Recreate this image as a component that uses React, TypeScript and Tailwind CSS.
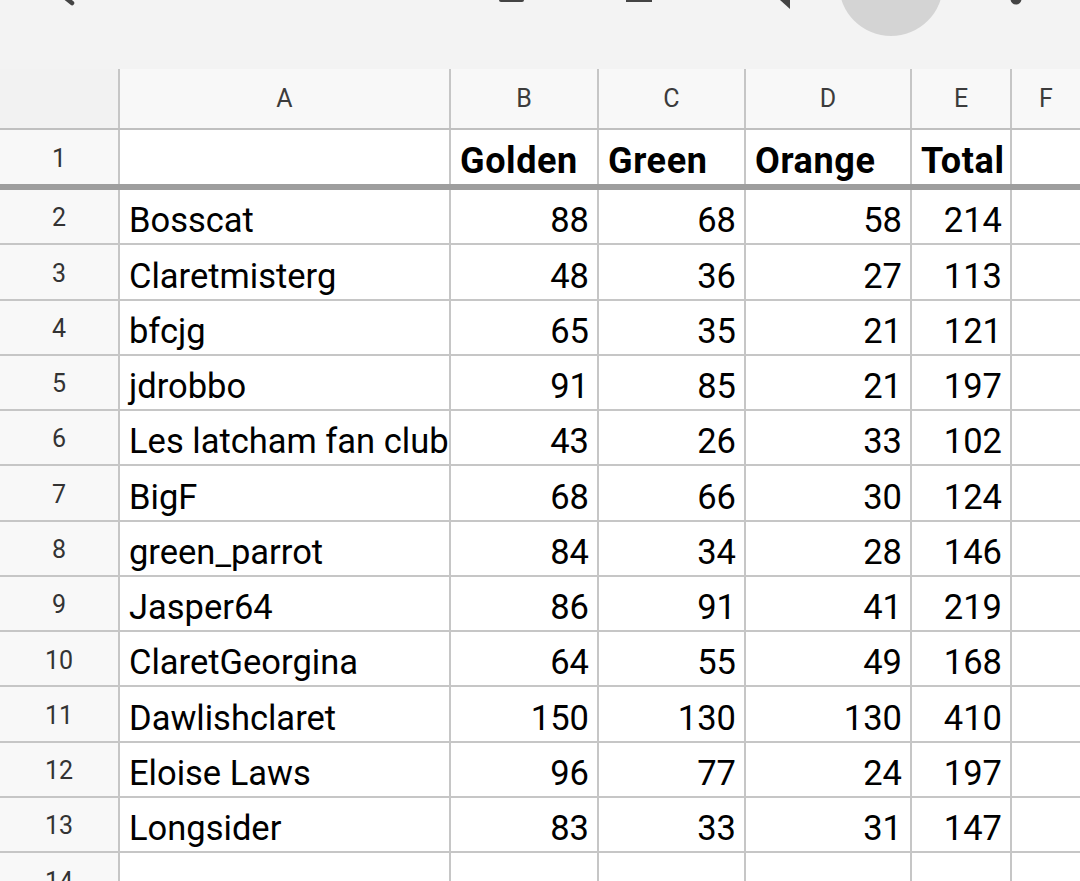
import React from 'react';

const rows: [string, number, number, number, number][] = [
  ['Bosscat', 88, 68, 58, 214],
  ['Claretmisterg', 48, 36, 27, 113],
  ['bfcjg', 65, 35, 21, 121],
  ['jdrobbo', 91, 85, 21, 197],
  ['Les latcham fan club', 43, 26, 33, 102],
  ['BigF', 68, 66, 30, 124],
  ['green_parrot', 84, 34, 28, 146],
  ['Jasper64', 86, 91, 41, 219],
  ['ClaretGeorgina', 64, 55, 49, 168],
  ['Dawlishclaret', 150, 130, 130, 410],
  ['Eloise Laws', 96, 77, 24, 197],
  ['Longsider', 83, 33, 31, 147],
];

const grid = 'grid grid-cols-[118px_329px_146px_145px_164px_98px_68px] gap-x-[2px] bg-[#c6c6c6]';

function Toolbar() {
  return (
    <div className="relative h-[69px] bg-[#f3f3f3] overflow-hidden">
      {/* icons cut off at the top edge */}
      <svg className="absolute inset-0" width="1080" height="69" viewBox="0 0 1080 69">
        <line x1="62" y1="-5" x2="72" y2="3" stroke="#444" strokeWidth="4.5" strokeLinecap="round" />
        <rect x="499" y="-4" width="25" height="6" rx="2" fill="#444" />
        <rect x="626" y="-4" width="26" height="6" fill="#444" />
        <polygon points="780,0 790,0 790,9" fill="#444" />
        <circle cx="891" cy="-16" r="52" fill="#d4d4d4" />
        <circle cx="1016" cy="-1" r="5.5" fill="#444" />
      </svg>
    </div>
  );
}

function RowNum({ n }: { n: number }) {
  return (
    <div className="bg-[#f8f8f8] flex items-center justify-center pt-[3px] text-[25px] text-[#333]">{n}</div>
  );
}

export default function App() {
  return (
    <div className="w-[1080px] h-[881px] overflow-hidden bg-white" style={{ fontFamily: 'Roboto, "Liberation Sans", sans-serif' }}>
      <Toolbar />

      {/* column letters */}
      <div className={`${grid} h-[61px] border-b-2 border-[#c0c0c0]`}>
        <div className="bg-[#f2f2f2]" />
        {['A', 'B', 'C', 'D', 'E', 'F'].map(l => (
          <div key={l} className="bg-[#f8f8f8] flex items-center justify-center text-[25px] text-[#3c3c3c]">{l}</div>
        ))}
      </div>

      {/* row 1 headers */}
      <div className={`${grid} h-[60px] border-b-[6px] border-[#9e9e9e]`}>
        <RowNum n={1} />
        <div className="bg-white" />
        {['Golden', 'Green', 'Orange', 'Total'].map(h => (
          <div key={h} className="bg-white flex items-end pl-[9px] pb-[3px] text-[36px] tracking-[0.6px] font-bold text-black leading-[40px] whitespace-nowrap">{h}</div>
        ))}
        <div className="bg-white" />
      </div>

      {rows.map((r, i) => (
        <div key={r[0]} className={`${grid} h-[55.27px] border-b-2 border-[#c6c6c6]`}>
          <RowNum n={i + 2} />
          <div className="bg-white flex items-end pl-[9px] pb-[3px] text-[34.5px] text-black leading-[40px] whitespace-nowrap overflow-hidden">{r[0]}</div>
          {r.slice(1).map((v, j) => (
            <div key={j} className="bg-white flex items-end justify-end pr-[8px] pb-[3px] text-[34.5px] text-black leading-[40px]">{v}</div>
          ))}
          <div className="bg-white" />
        </div>
      ))}

      <div className={`${grid} h-[55px]`}>
        <RowNum n={14} />
        <div className="bg-white" />
        <div className="bg-white" />
        <div className="bg-white" />
        <div className="bg-white" />
        <div className="bg-white" />
        <div className="bg-white" />
      </div>
    </div>
  );
}
